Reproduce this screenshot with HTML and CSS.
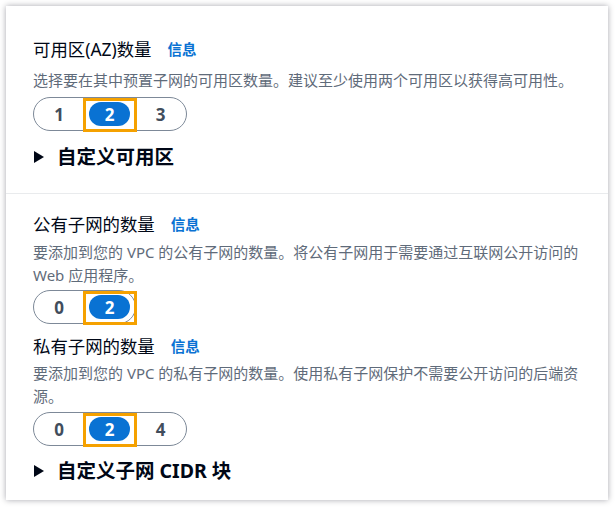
FILE: index.html
```html
<!DOCTYPE html>
<html lang="zh-CN">
<head>
    <meta charset="UTF-8">
    <meta name="viewport" content="width=device-width, initial-scale=1.0">
    <title>VPC 设置</title>
    <link rel="stylesheet" href="styles.css">
</head>
<body>
    <div class="card">
        <div class="section first">
            <div class="label">可用区(AZ)数量 <a class="info" href="#">信息</a></div>
            <p class="desc">选择要在其中预置子网的可用区数量。建议至少使用两个可用区以获得高可用性。</p>
            <div class="segments">
                <div class="seg">1</div>
                <div class="seg selected"><span class="pill">2</span><span class="mark"></span></div>
                <div class="seg">3</div>
            </div>
            <div class="expander">
                <svg class="caret" width="12" height="14" viewBox="0 0 12 14"><polygon points="1,1 11,7 1,13" fill="#000716"/></svg>
                自定义可用区
            </div>
        </div>

        <div class="section second">
            <div class="label">公有子网的数量 <a class="info" href="#">信息</a></div>
            <p class="desc">要添加到您的 VPC 的公有子网的数量。将公有子网用于需要通过互联网公开访问的 Web 应用程序。</p>
            <div class="segments">
                <div class="seg">0</div>
                <div class="seg selected"><span class="pill">2</span><span class="mark"></span></div>
            </div>

            <div class="label spaced">私有子网的数量 <a class="info" href="#">信息</a></div>
            <p class="desc tight">要添加到您的 VPC 的私有子网的数量。使用私有子网保护不需要公开访问的后端资源。</p>
            <div class="segments">
                <div class="seg">0</div>
                <div class="seg selected"><span class="pill">2</span><span class="mark"></span></div>
                <div class="seg">4</div>
            </div>
            <div class="expander last">
                <svg class="caret" width="12" height="14" viewBox="0 0 12 14"><polygon points="1,1 11,7 1,13" fill="#000716"/></svg>
                自定义子网 CIDR 块
            </div>
        </div>
    </div>
</body>
</html>
```

FILE: styles.css
```css
body {
    margin: 0;
    background: #ffffff;
    font-family: "Noto Sans", "Noto Sans CJK SC", sans-serif;
    color: #000716;
    padding: 6px 7px 7px 6px;
}

.card {
    background: #ffffff;
    box-shadow: 0 0 6px rgba(0, 7, 22, 0.35);
    height: 494px;
    box-sizing: border-box;
}

.section {
    padding: 0 10px 0 27px;
}

.section.first {
    padding-top: 31px;
    padding-bottom: 24px;
    border-bottom: 1px solid #e9ebed;
}

.section.second {
    padding-top: 18px;
}

.label {
    font-size: 17.4px;
    line-height: 24px;
    display: flex;
    align-items: center;
    gap: 16px;
}

.label.spaced {
    margin-top: 10px;
}

.info {
    color: #0972d3;
    font-weight: 700;
    font-size: 14.5px;
    text-decoration: none;
}

.desc {
    margin: 8px 0 5px;
    font-size: 15px;
    line-height: 23px;
    color: #5f6b7a;
}

.second .desc {
    margin-top: 5px;
    margin-bottom: 3px;
}

.second .desc.tight {
    margin-top: 4px;
    margin-bottom: 4px;
}

.segments {
    display: inline-flex;
    border: 1px solid #7d8998;
    border-radius: 17px;
    height: 32px;
}

.seg {
    position: relative;
    width: 51px;
    display: flex;
    align-items: center;
    justify-content: center;
    font-weight: 700;
    font-size: 17px;
    color: #414d5c;
}

.segments .seg:first-child {
    width: 50px;
}

.pill {
    background: #0972d3;
    color: #ffffff;
    width: 41px;
    height: 24px;
    border-radius: 12px;
    display: flex;
    align-items: center;
    justify-content: center;
}

.mark {
    position: absolute;
    top: 0;
    bottom: -2px;
    left: -1px;
    right: -2px;
    border: 3px solid #f5a100;
}

.expander {
    margin-top: 14px;
    display: flex;
    align-items: center;
    gap: 12px;
    font-size: 19.5px;
    font-weight: 700;
    line-height: 24px;
}

.expander.last {
    margin-top: 13px;
}

.caret {
    display: block;
}
```
